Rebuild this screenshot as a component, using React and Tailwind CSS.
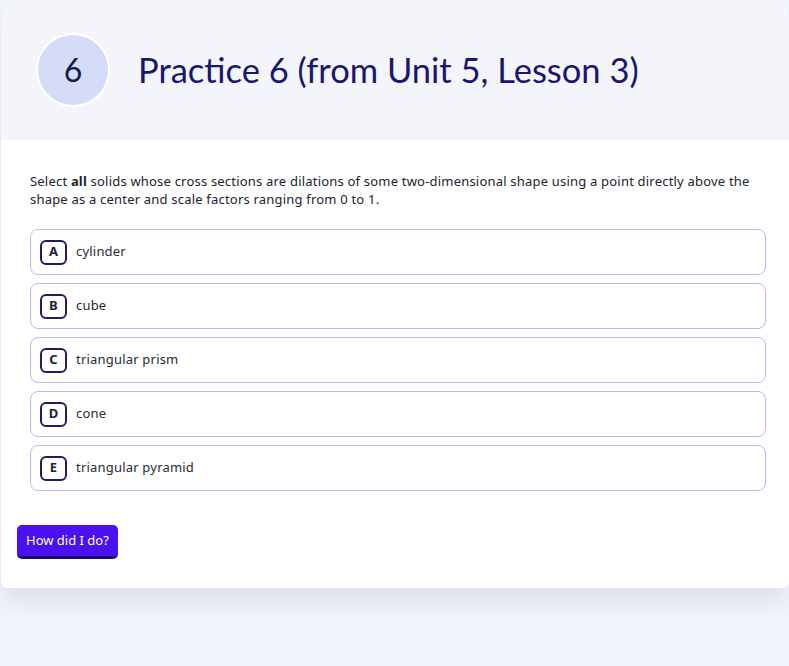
export default function App() {
  const options = [
    { letter: 'A', text: 'cylinder' },
    { letter: 'B', text: 'cube' },
    { letter: 'C', text: 'triangular prism' },
    { letter: 'D', text: 'cone' },
    { letter: 'E', text: 'triangular pyramid' },
  ];

  return (
    <div className="min-h-[666px] bg-[#f3f5fc] font-['Noto_Sans',sans-serif]">
      {/* card */}
      <div className="ml-px overflow-hidden rounded-b-md rounded-t-[20px] bg-white shadow-[0_14px_24px_rgba(30,40,90,0.10)]">
        {/* header */}
        <div className="flex h-[140px] items-center bg-[#f4f5fb] pl-[35px] font-['Lato',sans-serif]">
          <div className="flex h-[74px] w-[74px] items-center justify-center rounded-full border-2 border-white bg-[#d5dcf7] text-[32px] text-[#1b1a4f]">
            6
          </div>
          <h1 className="ml-[28px] text-[34.5px] text-[#1a1670]">
            Practice 6 (from Unit 5, Lesson 3)
          </h1>
        </div>

        {/* body */}
        <div className="pl-[29px] pr-[23px] pt-[32px] pb-[29px] tracking-[0.2px]">
          <p className="text-[13px] leading-[18px] text-[#222230]">
            Select <b>all</b> solids whose cross sections are dilations of some two-dimensional shape using a point directly above the shape as a center and scale factors ranging from 0 to 1.
          </p>

          <div className="mt-[21px] flex flex-col gap-2">
            {options.map((o) => (
              <div
                key={o.letter}
                className="flex h-[46px] items-center rounded-lg border border-[#b9bce8] bg-white pl-[9px] pr-3"
              >
                <span className="flex h-[25px] w-[27px] items-center justify-center rounded-[6px] border-2 border-[#221c5c] text-[13px] font-bold text-[#1f1d3a]">
                  {o.letter}
                </span>
                <span className="ml-[9px] text-[13px] text-[#2a2a3a]">{o.text}</span>
              </div>
            ))}
          </div>

          <button className="-ml-[13px] mt-[34px] h-[34px] rounded-[5px] border-b-[3px] border-[#200a70] bg-[#4a10ee] px-[9px] text-[13px] tracking-normal text-white">
            How did I do?
          </button>
        </div>
      </div>
    </div>
  );
}
